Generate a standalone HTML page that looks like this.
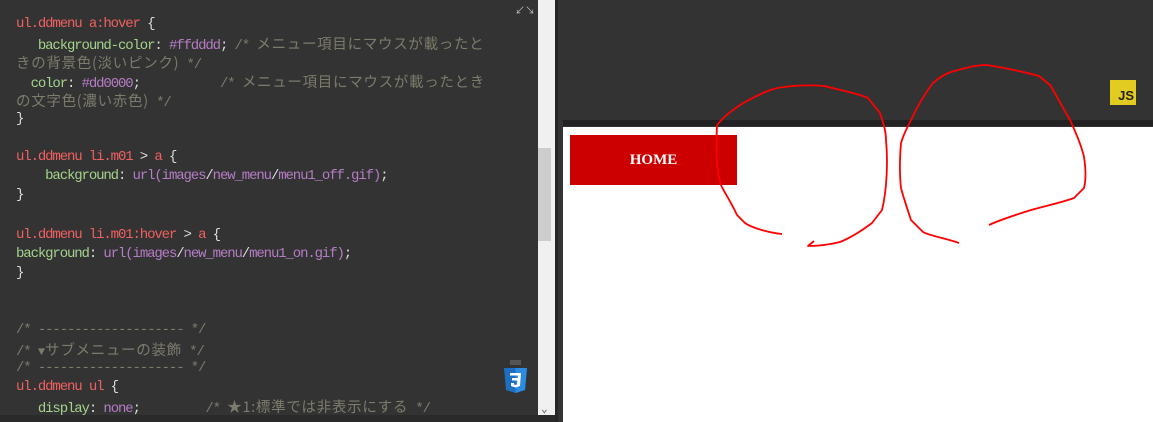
<!DOCTYPE html>
<html><head><meta charset="utf-8"><style>
*{margin:0;padding:0;box-sizing:border-box}
body{width:1153px;height:422px;background:#333;position:relative;overflow:hidden;font-family:"Liberation Mono","Noto Sans CJK JP",monospace}
#code{position:absolute;left:0;top:0;width:538px;height:415px;background:#333;overflow:hidden}
.l{position:absolute;left:16px;font-size:14px;letter-spacing:-1.12px;white-space:pre;color:#ddd;line-height:19px;height:19px}
.j{font-family:"Noto Sans CJK JP",sans-serif;font-size:14.5px;letter-spacing:0.7px}
.t{font-size:12px;letter-spacing:0}
.r{color:#f06060}.g{color:#a5d38c}.p{color:#b47cc4}.c{color:#7c7b6c}.w{color:#ddd}
#sb{position:absolute;left:538px;top:0;width:17px;height:415px;background:#f0f0f0}
#th{position:absolute;left:538px;top:148px;width:13px;height:93px;background:#cdcdcd}
#bot{position:absolute;left:0;top:415px;width:556px;height:7px;background:#2a2a2a}
#div{position:absolute;left:555px;top:0;width:3px;height:422px;background:#262626}
#right{position:absolute;left:558px;top:0;width:595px;height:422px;background:#333}
#bar{position:absolute;left:563px;top:120px;width:590px;height:6px;background:#222}
#white{position:absolute;left:563px;top:127px;width:590px;height:295px;background:#fff}
#home{position:absolute;left:570px;top:135px;width:167px;height:50px;background:#cc0000;color:#fff;font:bold 15px "Liberation Serif",serif;text-align:center;line-height:50px}
#js{position:absolute;left:1110px;top:80px;width:26px;height:25px;background:#e3cc21;color:#222;font:bold 13px "Liberation Sans",sans-serif;text-align:right;padding:9px 2px 0 0;line-height:14px}
</style></head><body>
<div id="code">
<div class="l" style="top:15px"><span class="r">ul.ddmenu a:hover</span> {</div>
<div class="l" style="top:34px">   <span class="g">background-color</span>: <span class="p">#ffdddd</span>; <span class="c">/* <span class="j">メニュー項目にマウスが載ったと</span></span></div>
<div class="l" style="top:53px"><span class="c"><span class="j">きの背景色(淡いピンク)</span> */</span></div>
<div class="l" style="top:72px">  <span class="g">color</span>: <span class="p">#dd0000</span>;           <span class="c">/* <span class="j">メニュー項目にマウスが載ったとき</span></span></div>
<div class="l" style="top:91px"><span class="c"><span class="j">の文字色(濃い赤色)</span> */</span></div>
<div class="l" style="top:110px">}</div>
<div class="l" style="top:148px"><span class="r">ul.ddmenu li.m01</span> &gt; <span class="r">a</span> {</div>
<div class="l" style="top:167px">    <span class="g">background</span>: <span class="p">url(images</span>/<span class="p">new_menu</span>/<span class="p">menu1_off.gif)</span>;</div>
<div class="l" style="top:186px">}</div>
<div class="l" style="top:226px"><span class="r">ul.ddmenu li.m01:hover</span> &gt; <span class="r">a</span> {</div>
<div class="l" style="top:245px"><span class="g">background</span>: <span class="p">url(images</span>/<span class="p">new_menu</span>/<span class="p">menu1_on.gif)</span>;</div>
<div class="l" style="top:264px">}</div>
<div class="l" style="top:321px"><span class="c">/* -------------------- */</span></div>
<div class="l" style="top:340px"><span class="c">/* <span class="t">▼</span><span class="j">サブメニューの装飾</span> */</span></div>
<div class="l" style="top:359px"><span class="c">/* -------------------- */</span></div>
<div class="l" style="top:378px"><span class="r">ul.ddmenu ul</span> {</div>
<div class="l" style="top:397px">   <span class="g">display</span>: <span class="p">none</span>;         <span class="c">/* <span class="j">★1:標準では非表示にする</span> */</span></div>
<div style="position:absolute;left:515px;top:2px;color:#bbb;font-size:10px">↙↘</div>
<svg style="position:absolute;left:503px;top:360px" width="25" height="34" viewBox="0 0 25 34">
<rect x="7" y="0" width="11" height="5" fill="#555"/>
<path d="M1 8h23l-2 22-9.5 3-9.5-3z" fill="#1f6fc0"/>
<path d="M12.5 8h11.5l-2 22-9.5 3z" fill="#2b8be0"/>
<path d="M7 13h11l-1 13-4.5 1.5-4.5-1.5v-3h3v1.5l1.5.5 1.5-.5.3-4H9v-2.5h5.8l.2-2.5H7z" fill="#fff"/>
</svg>
</div>
<div id="sb"></div><div id="th"></div>
<div style="position:absolute;left:541px;top:402px;color:#555;font-size:11px">⌄</div>
<div id="bot"></div>
<div id="div"></div>
<div id="right"></div>
<div id="bar"></div>
<div id="white"></div>
<div id="home">HOME</div>
<div id="js">JS</div>
<svg style="position:absolute;left:0;top:0" width="1153" height="422">
<path d="M782 234 C770 233 752 228 745 223 L737 215 C730 200 724 192 721 185 C716 170 716 150 717 125 C725 115 735 108 745 102 C760 94 772 88 784 87 C800 85 812 85 824 86 C840 90 860 94 868 98 L880 113 C884 125 886 132 886 140 C888 160 887 190 882 210 L872 223 C860 232 850 238 840 242 C828 245 816 246 808 246 L814 241" fill="none" stroke="#f00" stroke-width="1.8" stroke-linejoin="round"/>
<path d="M959 243 C945 238 930 236 923 232 L911 220 C906 205 903 196 901 188 C899 170 900 155 901 143 C904 133 907 128 911 120 C918 105 926 92 933 83 C940 77 945 74 951 72 C965 68 975 65 987 65 C1005 68 1025 72 1039 76 L1050 85 C1058 98 1064 110 1070 120 C1077 135 1082 148 1084 157 C1086 170 1086 180 1084 188 L1074 198 C1060 203 1045 206 1031 210 C1015 215 1000 220 989 225" fill="none" stroke="#f00" stroke-width="1.8" stroke-linejoin="round"/>
</svg>
</body></html>
